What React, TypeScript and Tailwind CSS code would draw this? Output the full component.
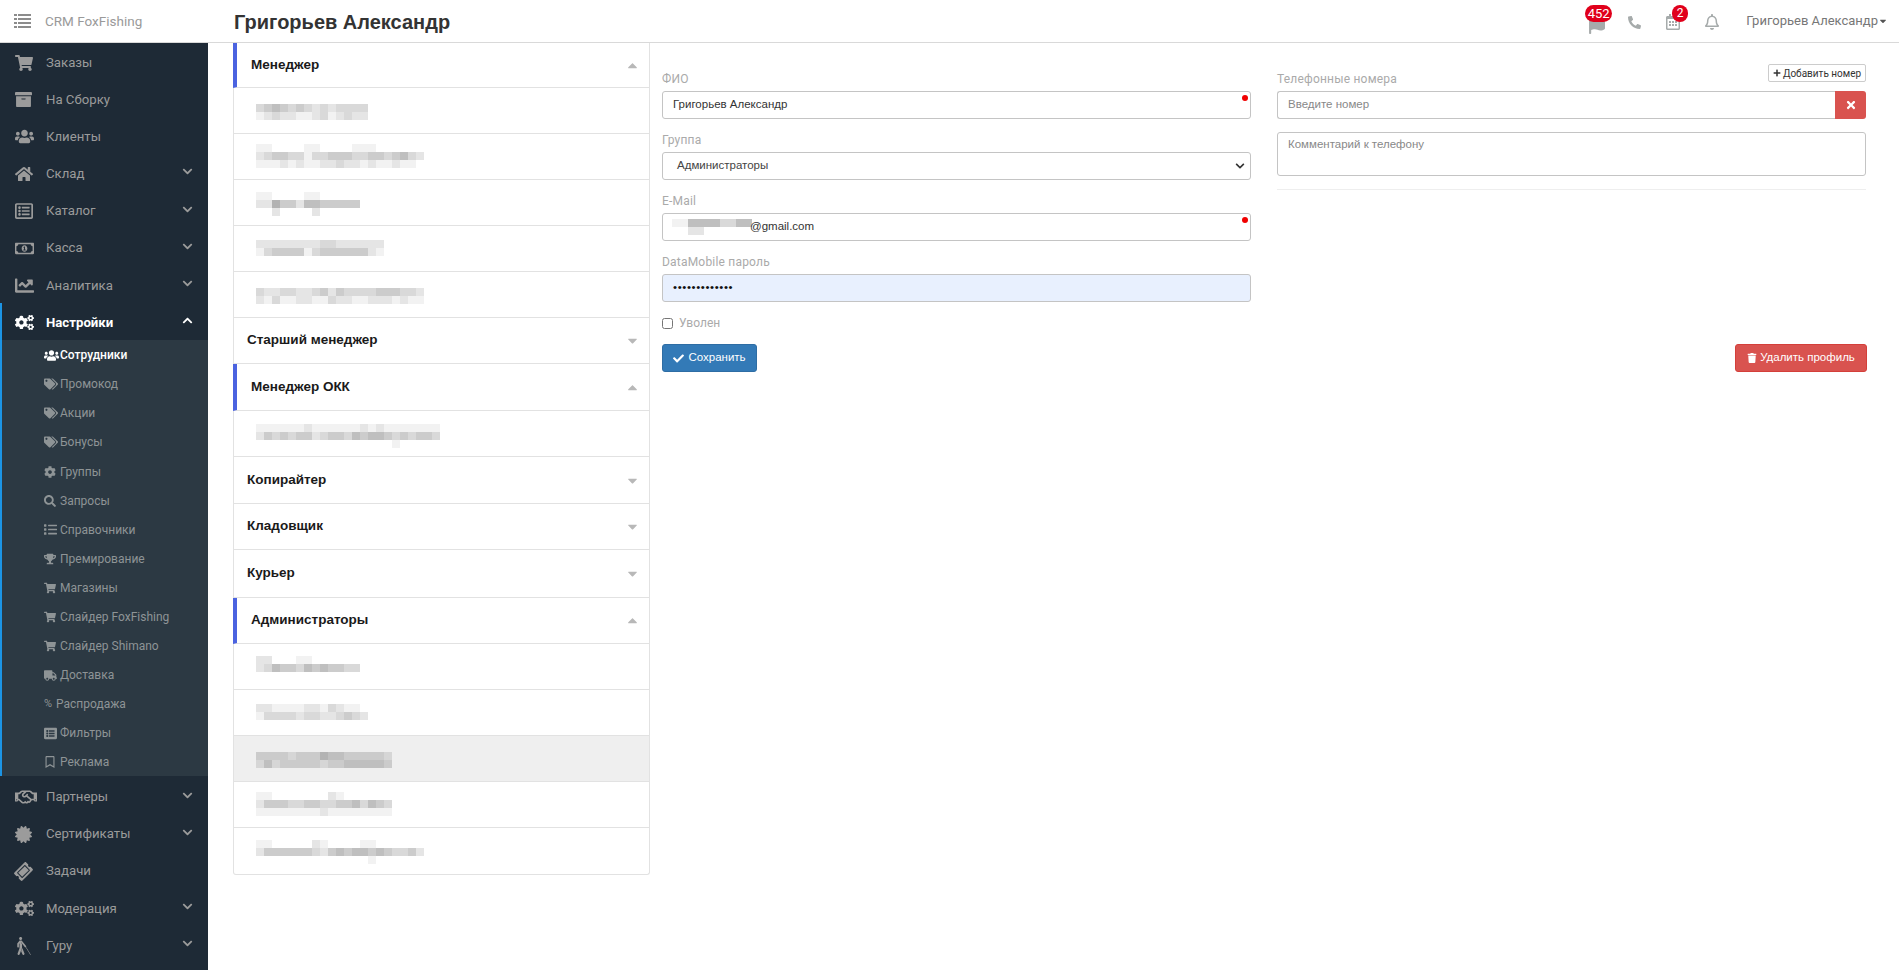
import React from 'react';
import {
  FaShoppingCart, FaArchive, FaUsers, FaHome, FaListAlt, FaRegListAlt, FaRegMoneyBillAlt, FaChartLine, FaCogs,
  FaTags, FaCog, FaSearch, FaList, FaTrophy, FaTruck, FaRegBookmark, FaRegHandshake, FaCertificate,
  FaTicketAlt, FaBlind, FaChevronDown, FaChevronUp, FaCheck, FaTrash, FaTimes, FaPlus, FaPhone,
  FaRegBell, FaFlag, FaCaretUp, FaCaretDown, FaRegCalendarAlt,
} from 'react-icons/fa';

type MenuItem = { label: string; icon: React.ReactNode; chevron?: boolean };

const topItems: MenuItem[] = [
  { label: 'Заказы', icon: <FaShoppingCart size={18} /> },
  { label: 'На Сборку', icon: <FaArchive size={17} /> },
  { label: 'Клиенты', icon: <FaUsers size={19} /> },
  { label: 'Склад', icon: <FaHome size={18} />, chevron: true },
  { label: 'Каталог', icon: <FaRegListAlt size={18} />, chevron: true },
  { label: 'Касса', icon: <FaRegMoneyBillAlt size={19} />, chevron: true },
  { label: 'Аналитика', icon: <FaChartLine size={19} />, chevron: true },
];

const subItems: { label: string; icon: React.ReactNode; active?: boolean; slot?: string }[] = [
  { label: 'Сотрудники', icon: <FaUsers size={15} />, active: true },
  { label: 'Промокод', icon: <FaTags size={14} /> },
  { label: 'Акции', icon: <FaTags size={14} /> },
  { label: 'Бонусы', icon: <FaTags size={14} /> },
  { label: 'Группы', icon: <FaCog size={12} /> },
  { label: 'Запросы', icon: <FaSearch size={12} /> },
  { label: 'Справочники', icon: <FaList size={13} /> },
  { label: 'Премирование', icon: <FaTrophy size={12} /> },
  { label: 'Магазины', icon: <FaShoppingCart size={12} /> },
  { label: 'Слайдер FoxFishing', icon: <FaShoppingCart size={12} /> },
  { label: 'Слайдер Shimano', icon: <FaShoppingCart size={12} /> },
  { label: 'Доставка', icon: <FaTruck size={13} /> },
  { label: 'Распродажа', icon: <span className="text-[11px]">%</span>, slot: 'w-[12px]' },
  { label: 'Фильтры', icon: <FaListAlt size={13} /> },
  { label: 'Реклама', icon: <FaRegBookmark size={12} /> },
];

const bottomItems: MenuItem[] = [
  { label: 'Партнеры', icon: <FaRegHandshake size={22} />, chevron: true },
  { label: 'Сертификаты', icon: <FaCertificate size={17} />, chevron: true },
  { label: 'Задачи', icon: <FaTicketAlt size={17} className="-rotate-45" /> },
  { label: 'Модерация', icon: <FaCogs size={19} />, chevron: true },
  { label: 'Гуру', icon: <FaBlind size={18} />, chevron: true },
];

// mosaic rows: each digit is one 8px block, 0 = background, 9 = darkest
const Mosaic = ({ rows }: { rows: string[] }) => (
  <div className="flex flex-col">
    {rows.map((row, i) => (
      <div key={i} className="flex h-2">
        {row.split('').map((c, j) => (
          <div key={j} className="w-2 h-2" style={{ backgroundColor: c === '0' ? 'transparent' : `rgb(0 0 0 / ${Number(c) * 0.05})` }} />
        ))}
      </div>
    ))}
  </div>
);

type Person = { rows: string[]; pad: string; active?: boolean };

const groups: { title: string; height: string; open: boolean; people: Person[] }[] = [
  {
    title: 'Менеджер',
    height: 'h-[45px]',
    open: true,
    people: [
      { pad: 'pt-[16px]', rows: ['34543432323333', '12322112312322'] },
      { pad: 'pt-[10px]', rows: ['110000110000111000000', '234433133444334434532', '111212112232212112110'] },
      { pad: 'pt-[12px]', rows: ['1100001100000', '2264425544444', '0020000200000'] },
      { pad: 'pt-[14px]', rows: ['2222222233222222', '1344441344444421'] },
      { pad: 'pt-[16px]', rows: ['322332234243333444332', '213112211322112221211'] },
    ],
  },
  { title: 'Старший менеджер', height: 'h-[46px]', open: false, people: [] },
  {
    title: 'Менеджер ОКК',
    height: 'h-[47px]',
    open: true,
    people: [{ pad: 'pt-[13px]', rows: ['11111121111112121111111', '24343442344354554343443', '00000000000000000100000'] }],
  },
  { title: 'Копирайтер', height: 'h-[47px]', open: false, people: [] },
  { title: 'Кладовщик', height: 'h-[46px]', open: false, people: [] },
  { title: 'Курьер', height: 'h-[48px]', open: false, people: [] },
  {
    title: 'Администраторы',
    height: 'h-[46px]',
    open: true,
    people: [
      { pad: 'pt-[12px]', rows: ['2200011000000', '2354435454433'] },
      { pad: 'pt-[14px]', rows: ['2211112213211', '13333233223432'] },
      { pad: 'pt-[16px]', rows: ['33332333544333332', '24233333233444443'], active: true },
      { pad: 'pt-[10px]', rows: ['11000000021000000', '24443344334453543', '11111111211111111'] },
      { pad: 'pt-[12px]', rows: ['110000021000011000000', '244444432454554543342', '000000000000001000000'] },
    ],
  },
];

const fieldClass = "h-[28px] w-full rounded-[3px] border border-[#c4c4c4] bg-white flex items-center text-[11.5px] font-['Liberation_Sans',sans-serif]";

const App: React.FC = () => {
  return (
    <div className="flex flex-col h-[970px] overflow-hidden bg-white font-['Roboto',sans-serif]">
      {/* Top bar */}
      <header className="h-[43px] shrink-0 flex items-center border-b border-[#d9d9d9] bg-white">
        <div className="w-[234px] shrink-0 flex items-center pl-[14px] text-[#9a9a9a]">
          <svg width="17" height="14" viewBox="0 0 17 14" className="text-[#8c8c8c]" fill="currentColor">
            <rect x="0" y="0" width="3" height="2" /><rect x="4" y="0" width="13" height="2" />
            <rect x="0" y="4" width="3" height="2" /><rect x="4" y="4" width="13" height="2" />
            <rect x="0" y="8" width="3" height="2" /><rect x="4" y="8" width="13" height="2" />
            <rect x="0" y="12" width="3" height="2" /><rect x="4" y="12" width="13" height="2" />
          </svg>
          <span className="ml-[14px] text-[13.5px]">CRM FoxFishing</span>
        </div>
        <h1 className="mt-[1px] text-[20px] font-bold text-[#333] font-['Liberation_Sans',sans-serif]">Григорьев Александр</h1>
        <div className="ml-auto flex items-center text-[#a6abab]">
          <div className="relative w-[17px] h-[17px]">
            <FaFlag size={17} className="mt-[4px]" />
            <span className="absolute -top-[8px] -left-[3px] h-[17px] w-[27px] rounded-full bg-[#e0001b] text-white text-[13px] leading-[17px] text-center">452</span>
          </div>
          <FaPhone size={13} className="ml-[23px] rotate-90 mt-[2px]" />
          <div className="relative ml-[24px] mt-[2px]">
            <FaRegCalendarAlt size={16} />
            <span className="absolute -top-[9px] left-[7px] w-[16px] h-[17px] rounded-full bg-[#e0001b] text-white text-[12px] leading-[17px] text-center">2</span>
          </div>
          <FaRegBell size={16} className="ml-[23px] mt-[2px]" />
          <span className="ml-[26px] text-[13px] text-[#777]">Григорьев Александр</span>
          <FaCaretDown size={10} className="mr-[11px] text-[#555]" />
        </div>
      </header>

      <div className="flex flex-1 min-h-0">
        {/* Sidebar */}
        <aside className="w-[208px] shrink-0 bg-[#1e2a36] text-[#9b9b9b] text-[13.2px] overflow-hidden">
          {topItems.map((item) => <TopRow key={item.label} item={item} />)}
          <div className="border-l-[2px] border-[#1c94e4]">
            <div className="h-[37.1px] pt-[2px] -ml-[2px] pl-[15px] pr-[15px] flex items-center text-white font-bold">
              <span className="w-[31px] flex justify-start"><FaCogs size={19} /></span>
              <span>Настройки</span>
              <FaChevronUp size={11} className="ml-auto mb-[4px]" />
            </div>
            <div className="bg-[#2c3943] flex flex-col text-[12px]">
              {subItems.map((s) => (
                <div key={s.label} className={`h-[29.1px] pt-[1px] flex items-center pl-[42px] ${s.active ? 'text-white font-medium' : 'text-[#8e9496]'}`}>
                  <span className={`shrink-0 flex justify-start ${s.slot ?? 'w-[16px]'}`}>{s.icon}</span>
                  <span>{s.label}</span>
                </div>
              ))}
            </div>
          </div>
          {bottomItems.map((item) => <TopRow key={item.label} item={item} low />)}
        </aside>

        {/* Groups list */}
        <div className="ml-[25px] w-[417px] shrink-0">
          <div className="border border-t-0 border-[#e2e2e2] rounded-b-[3px]">
            {groups.map((g) => (
              <div key={g.title}>
                <div className={`${g.height} flex items-center border-b border-[#e2e2e2] pr-[9px] ${g.open ? 'border-l-[4px] border-l-[#4b63e0] pl-[14px] -ml-px' : 'pl-[13px]'}`}>
                  <span className="text-[13.5px] font-bold text-[#1a1a1a] font-['Liberation_Sans',sans-serif]">{g.title}</span>
                  {g.open ? <FaCaretUp size={15} className="ml-auto text-[#b8b8b8]" /> : <FaCaretDown size={15} className="ml-auto text-[#b8b8b8]" />}
                </div>
                {g.people.map((p, i) => (
                  <div key={i} className={`h-[46px] pl-[22px] ${p.pad} ${g.title === 'Администраторы' && i === g.people.length - 1 ? '' : 'border-b border-[#e2e2e2]'} ${p.active ? 'bg-[#efefef]' : ''}`}>
                    <Mosaic rows={p.rows} />
                  </div>
                ))}
              </div>
            ))}
          </div>
        </div>

        {/* Form */}
        <div className="flex-1 pl-[12px] pr-[33px] pt-[29px]">
          <div className="flex gap-[26px]">
            <div className="flex-1 flex flex-col">
              <Label>ФИО</Label>
              <div className={`${fieldClass} relative pl-[10px] text-[#333]`}>
                Григорьев Александр
                <span className="absolute right-[2px] top-[3px] w-[6px] h-[6px] rounded-full bg-[#f00000]" />
              </div>
              <Label className="mt-[14px]">Группа</Label>
              <div className={`${fieldClass} pl-[14px] pr-[5px] text-[#444]`}>
                Администраторы
                <FaChevronDown size={10} className="ml-auto text-[#333]" />
              </div>
              <Label className="mt-[14px]">E-Mail</Label>
              <div className={`${fieldClass} relative pl-[9px] text-[#333]`}>
                <Mosaic rows={['1155553355', '0022000000']} />
                <span className="-ml-[2px]">@gmail.com</span>
                <span className="absolute right-[2px] top-[3px] w-[6px] h-[6px] rounded-full bg-[#f00000]" />
              </div>
              <Label className="mt-[14px]">DataMobile пароль</Label>
              <div className={`${fieldClass} pl-[10px] !bg-[#e8f0fe] text-[#111] tracking-[0.6px]`}>•••••••••••••</div>
              <label className="mt-[12px] h-[18px] flex items-center gap-[6px] text-[12px] text-[#aaa]">
                <input type="checkbox" className="w-[11px] h-[11px]" />
                Уволен
              </label>
              <button className="mt-[12px] w-[95px] h-[28px] rounded-[3px] bg-[#337ab7] border border-[#2e6da4] text-white text-[11.5px] font-['Liberation_Sans',sans-serif] flex items-center justify-center gap-[4px]">
                <FaCheck size={11} /> Сохранить
              </button>
            </div>
            <div className="flex-1 flex flex-col">
              <div className="relative">
                <Label>Телефонные номера</Label>
                <button className="absolute right-0 -top-[8px] h-[18px] w-[98px] border border-[#ccc] rounded-[2px] bg-white text-[10px] text-[#333] flex items-center justify-center gap-[2px]">
                  <FaPlus size={8} /> Добавить номер
                </button>
              </div>
              <div className="flex">
                <div className="h-[28px] flex-1 rounded-l-[3px] border border-r-0 border-[#c4c4c4] pl-[10px] flex items-center text-[11.5px] text-[#888] font-['Liberation_Sans',sans-serif]">Введите номер</div>
                <div className="w-[31px] h-[28px] bg-[#d9534f] rounded-r-[3px] flex items-center justify-center text-white"><FaTimes size={12} /></div>
              </div>
              <div className="mt-[13px] h-[44px] rounded-[3px] border border-[#c4c4c4] pl-[10px] pt-[3px] text-[11.5px] text-[#888] font-['Liberation_Sans',sans-serif]">Комментарий к телефону</div>
              <div className="mt-[13px] border-t border-[#eee]" />
              <div className="flex-1" />
              <button className="self-end -mr-[1px] w-[132px] h-[28px] rounded-[3px] bg-[#d9534f] border border-[#d43f3a] text-white text-[11.5px] font-['Liberation_Sans',sans-serif] whitespace-nowrap flex items-center justify-center gap-[3px]">
                <FaTrash size={10} /> Удалить профиль
              </button>
            </div>
          </div>
        </div>
      </div>
    </div>
  );
};

const TopRow = ({ item, low }: { item: MenuItem; low?: boolean }) => (
  <div className={`h-[37.15px] pl-[15px] pr-[15px] flex items-center ${low ? 'pt-[4px]' : 'pt-[2px]'}`}>
    <span className="w-[31px] flex justify-start">{item.icon}</span>
    <span>{item.label}</span>
    {item.chevron && <FaChevronDown size={11} className="ml-auto mb-[4px]" />}
  </div>
);

const Label = ({ children, className = '' }: { children: React.ReactNode; className?: string }) => (
  <div className={`h-[15px] mb-[4px] text-[12px] tracking-[0.2px] leading-[15px] text-[#aaa] ${className}`}>{children}</div>
);

export default App;
